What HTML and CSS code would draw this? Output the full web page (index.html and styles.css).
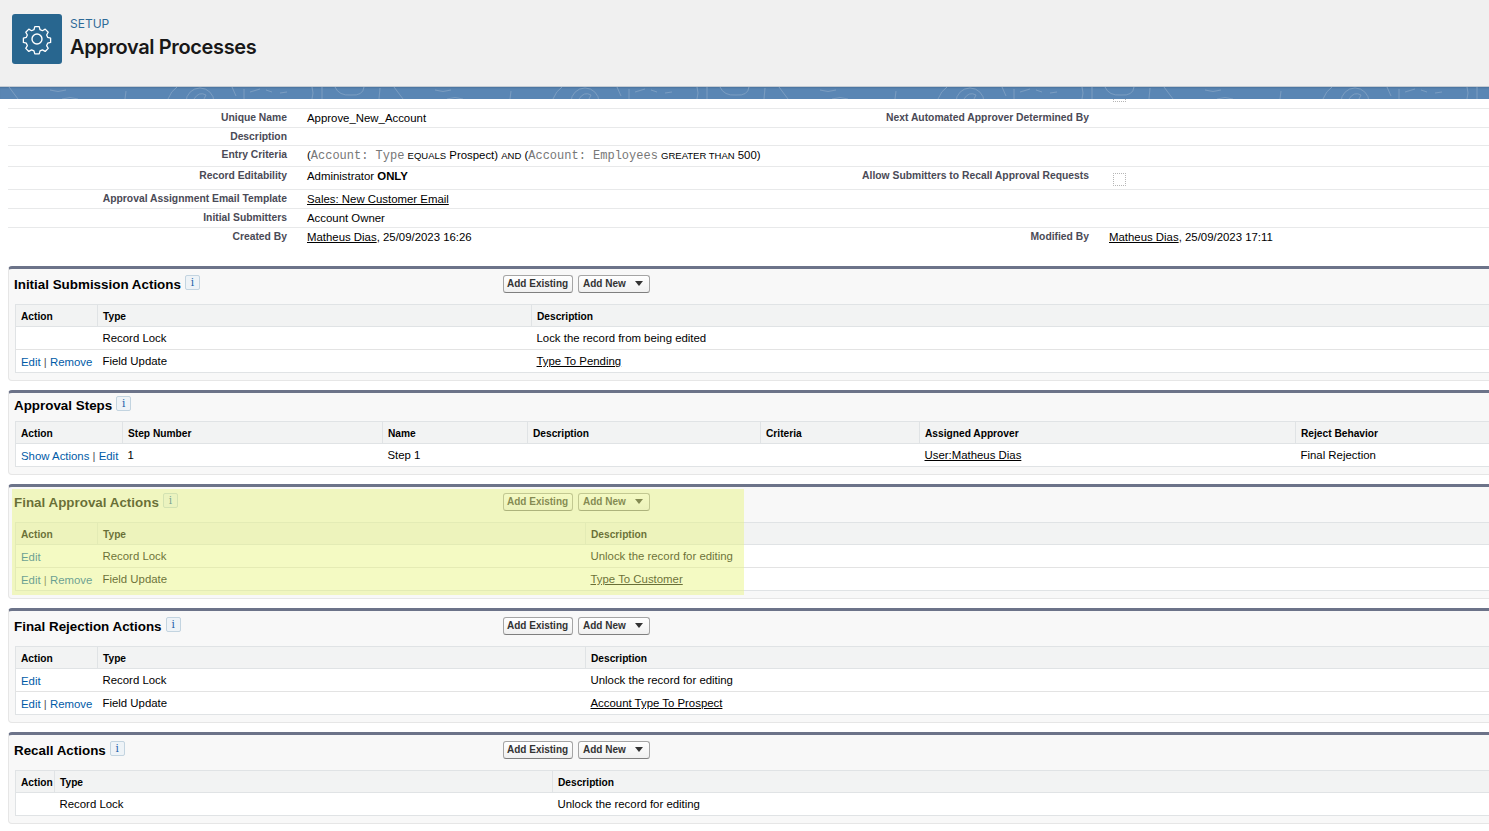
FILE: index.html
```html
<!DOCTYPE html>
<html lang="en">
<head>
<meta charset="utf-8">
<title>Approval Processes</title>
<link rel="stylesheet" href="styles.css">
</head>
<body>
<header class="page-header">
  <div class="page-icon">
    <svg width="32" height="32" viewBox="0 0 32 32" fill="none" stroke="#fff" stroke-width="1.4" stroke-linejoin="round">
      <path d="M13.6 3.2h4.8l.9 3.3 2.6 1.1 3-1.7 3.3 3.3-1.7 3 1.1 2.6 3.200.9v4.600l-3.200.9-1.100 2.600 1.700 3-3.300 3.300-3-1.700-2.600 1.100-.9 3.300h-4.800l-.9-3.300-2.600-1.100-3 1.700-3.300-3.300 1.700-3-1.100-2.600-3.200-.9v-4.600l3.200-.9 1.100-2.600-1.700-3 3.300-3.300 3 1.700 2.600-1.100z" transform="translate(16 16) scale(.92) translate(-16 -16.600)"/>
      <circle cx="16" cy="16" r="5"/>
    </svg>
  </div>
  <div class="page-titles">
    <div class="eyebrow">SETUP</div>
    <h1 class="page-title">Approval Processes</h1>
  </div>
</header>
<div class="band">
  <svg width="100%" height="12" fill="none" stroke="#7b9dc1" stroke-width="1">
    <defs>
      <pattern id="tile" width="385" height="12" patternUnits="userSpaceOnUse">
        <path d="M9 0l9 12M50 3q8 3 16 0M62 12q8-3 16 0M125 12l1-8M168 12q3-8 9-12"/>
        <circle cx="200" cy="15" r="14"/>
        <path d="M194 12q5-8 12-4l-2 4M232 0l4 9M244 2v10M250 5l10-3M266 3l6 2M280 6l7-1M312 0q2 6 0 12M322 0v12M335 0q4 9 16 8 12 1 13-8M380 1l-1 11"/>
      </pattern>
    </defs>
    <rect width="100%" height="12" fill="url(#tile)" stroke="none"/>
  </svg>
</div>
<main class="content">
  <div class="clipped-check"></div>
  <table class="detail">
    <colgroup><col class="d1"><col class="d2"><col class="d3"><col class="d4"></colgroup>
    <tr class="h19"><th>Unique Name</th><td>Approve_New_Account</td><th>Next Automated Approver Determined By</th><td></td></tr>
    <tr class="h18"><th>Description</th><td></td><th></th><td></td></tr>
    <tr class="h21"><th>Entry Criteria</th><td class="criteria">(<code>Account: Type</code> <small>EQUALS</small> Prospect) <small>AND</small> (<code>Account: Employees</code> <small>GREATER THAN</small> 500)</td><th></th><td></td></tr>
    <tr class="h23"><th>Record Editability</th><td>Administrator <b>ONLY</b></td><th>Allow Submitters to Recall Approval Requests</th><td><span class="check"></span></td></tr>
    <tr class="h19"><th>Approval Assignment Email Template</th><td><a>Sales: New Customer Email</a></td><th></th><td></td></tr>
    <tr class="h19"><th>Initial Submitters</th><td>Account Owner</td><th></th><td></td></tr>
    <tr class="h19 last"><th>Created By</th><td><a>Matheus Dias</a>, 25/09/2023 16:26</td><th>Modified By</th><td><a>Matheus Dias</a>, 25/09/2023 17:11</td></tr>
  </table>

  <section class="block first">
    <div class="block-head">
      <div class="block-title"><h2>Initial Submission Actions</h2><span class="info">i</span></div>
      <div class="buttons"><button>Add Existing</button><button class="menu">Add New<i></i></button></div>
    </div>
    <table class="list">
      <colgroup><col class="c82"><col class="c434"><col></colgroup>
      <tr><th>Action</th><th>Type</th><th>Description</th></tr>
      <tr><td></td><td>Record Lock</td><td>Lock the record from being edited</td></tr>
      <tr><td class="act"><a class="l">Edit</a> | <a class="l">Remove</a></td><td>Field Update</td><td><a>Type To Pending</a></td></tr>
    </table>
  </section>

  <section class="block">
    <div class="block-head short">
      <div class="block-title"><h2>Approval Steps</h2><span class="info">i</span></div>
    </div>
    <table class="list">
      <colgroup><col class="c107"><col class="c260"><col class="c145"><col class="c233"><col class="c159"><col class="c376"><col></colgroup>
      <tr><th>Action</th><th>Step Number</th><th>Name</th><th>Description</th><th>Criteria</th><th>Assigned Approver</th><th>Reject Behavior</th></tr>
      <tr><td class="act"><a class="l">Show Actions</a> | <a class="l">Edit</a></td><td>1</td><td>Step 1</td><td></td><td></td><td><a>User:Matheus Dias</a></td><td>Final Rejection</td></tr>
    </table>
  </section>

  <section class="block">
    <div class="block-head">
      <div class="block-title"><h2>Final Approval Actions</h2><span class="info">i</span></div>
      <div class="buttons"><button>Add Existing</button><button class="menu">Add New<i></i></button></div>
    </div>
    <table class="list">
      <colgroup><col class="c82"><col class="c488"><col></colgroup>
      <tr><th>Action</th><th>Type</th><th>Description</th></tr>
      <tr><td class="act"><a class="l">Edit</a></td><td>Record Lock</td><td>Unlock the record for editing</td></tr>
      <tr><td class="act"><a class="l">Edit</a> | <a class="l">Remove</a></td><td>Field Update</td><td><a>Type To Customer</a></td></tr>
    </table>
    <div class="highlight"></div>
  </section>

  <section class="block">
    <div class="block-head">
      <div class="block-title"><h2>Final Rejection Actions</h2><span class="info">i</span></div>
      <div class="buttons"><button>Add Existing</button><button class="menu">Add New<i></i></button></div>
    </div>
    <table class="list">
      <colgroup><col class="c82"><col class="c488"><col></colgroup>
      <tr><th>Action</th><th>Type</th><th>Description</th></tr>
      <tr><td class="act"><a class="l">Edit</a></td><td>Record Lock</td><td>Unlock the record for editing</td></tr>
      <tr><td class="act"><a class="l">Edit</a> | <a class="l">Remove</a></td><td>Field Update</td><td><a>Account Type To Prospect</a></td></tr>
    </table>
  </section>

  <section class="block">
    <div class="block-head">
      <div class="block-title"><h2>Recall Actions</h2><span class="info">i</span></div>
      <div class="buttons"><button>Add Existing</button><button class="menu">Add New<i></i></button></div>
    </div>
    <table class="list">
      <colgroup><col class="c39"><col class="c498"><col></colgroup>
      <tr><th>Action</th><th>Type</th><th>Description</th></tr>
      <tr><td></td><td>Record Lock</td><td>Unlock the record for editing</td></tr>
    </table>
  </section>
</main>
</body>
</html>
```
FILE: styles.css
```css
* { box-sizing: border-box; }
html, body { margin: 0; height: 831px; overflow: hidden; background: #fff; }
body { font-family: "Liberation Sans", Arial, sans-serif; font-size: 11.4px; color: #000; }

.page-header { display: flex; height: 87px; padding: 14px 12px 0; gap: 8px; background: #f0f0f0; border-bottom: 1px solid #c5ccd4; }
.page-icon { display: flex; align-items: center; justify-content: center; width: 50px; height: 50px; border-radius: 3px; background: #28668f; }
.page-titles { display: flex; flex-direction: column; }
.eyebrow { font-family: Inter, "Liberation Sans", sans-serif; font-size: 12px; line-height: 18px; color: #2e6a97; margin-top: 1px; }
.page-title { margin: -1px 0 0; font-family: Inter, "Liberation Sans", sans-serif; font-size: 20px; font-weight: 600; line-height: 30px; color: #181818; letter-spacing: -.37px; }

.band { height: 12px; background: #5a86b4; box-shadow: inset 0 2px 2px -1px #4a739c; }
.band svg { display: block; }

.content { width: 1520px; padding-left: 8px; }
.clipped-check { width: 13px; height: 3px; margin-left: 1105px; border: 1px dotted #b5b5b5; border-top: 0; }

.detail { width: 1512px; margin-top: 6px; border-collapse: collapse; table-layout: fixed; border-top: 1px solid #e8e9ea; }
.d1 { width: 289px; } .d2 { width: 502px; } .d3 { width: 300px; }
.detail tr { border-bottom: 1px solid #e8e9ea; }
.detail tr.last { border-bottom: 0; }
.detail th, .detail td { padding: 2px 10px 0; vertical-align: top; line-height: 14px; }
.detail th { text-align: right; font-size: 10.33px; font-weight: bold; color: #4a4a56; }
.h18 { height: 18px; } .h19 { height: 19px; } .h21 { height: 21px; } .h23 { height: 23px; }
.detail a, .list td a { color: #000; text-decoration: underline; }
.detail b { font-weight: bold; }
.criteria code { font-family: "Liberation Mono", monospace; font-size: 12px; color: #777; }
.criteria small { font-size: 9.5px; }
.check { display: block; width: 13px; height: 13px; margin: 4px 0 0 4px; border: 1px dotted #b5b5b5; border-radius: 1px; }

.block { position: relative; margin-top: 9px; padding: 0 0 7px 6px; border: 1px solid #e6e6e6; border-top: 3px solid #6c7389; border-radius: 4px; background: #f8f8f8; }
.block.first { margin-top: 19px; }
.block-head { display: flex; height: 35px; margin-left: -6px; padding: 6px 0 0 5px; }
.block-head.short { height: 28px; padding-top: 3px; }
.block-title { display: flex; align-items: flex-start; width: 489px; gap: 4px; }
h2 { margin: 2px 0 0; font-size: 13.4px; line-height: 16px; font-weight: bold; color: #000; }
.short h2 { margin-top: 2px; }
.info { display: block; width: 15px; height: 15px; border: 1px solid #c3d4e0; border-radius: 2px; background: #eef3f7; font-family: "DejaVu Serif", serif; font-size: 10.5px; line-height: 12px; text-align: center; color: #1a5fa8; }
.buttons { display: flex; gap: 5px; }
button { width: 70px; height: 18px; padding: 0 0 0 3px; white-space: nowrap; text-align: left; border: 1px solid #a5a5a5; border-bottom-color: #7f7f7f; border-radius: 3px; background: linear-gradient(#fff, #f0f0f0); font-family: "Liberation Sans", Arial, sans-serif; font-size: 10px; font-weight: bold; line-height: 15px; color: #333; }
.menu { display: flex; align-items: center; width: 72px; padding-left: 4px; }
.menu i { width: 0; height: 0; margin-left: 9px; border: 4px solid transparent; border-top: 5px solid #333; border-bottom: 0; }

.list { width: 100%; border-collapse: collapse; table-layout: fixed; background: #fff; border-left: 1px solid #e0e3e5; border-bottom: 1px solid #e0e3e5; }
.c82 { width: 82px; } .c434 { width: 434px; } .c488 { width: 488px; } .c39 { width: 39px; } .c498 { width: 498px; }
.c107 { width: 107px; } .c260 { width: 260px; } .c145 { width: 145px; } .c233 { width: 233px; } .c159 { width: 159px; } .c376 { width: 376px; }
.list tr { height: 23px; border-bottom: 1px solid #e3e3e3; }
.list tr:first-child { height: 22px; background: #f2f3f3; border-top: 1px solid #e0e3e5; border-bottom: 1px solid #e0e3e5; }
.list tr:last-child { border-bottom: 0; }
.list th { padding: 2px 5px 0; text-align: left; font-size: 10.2px; font-weight: bold; border-left: 1px solid #e0e3e5; }
.list th:first-child { border-left: 0; }
.list td { padding: 1px 5px 0; white-space: nowrap; }
.list td.act { padding-top: 2px; padding-bottom: 0; color: #555; }
.l, .list td a.l { color: #015ba7; text-decoration: none; }

.highlight { position: absolute; left: 3px; top: 2px; width: 732px; height: 106px; background: rgba(231, 244, 122, .45); }
```
